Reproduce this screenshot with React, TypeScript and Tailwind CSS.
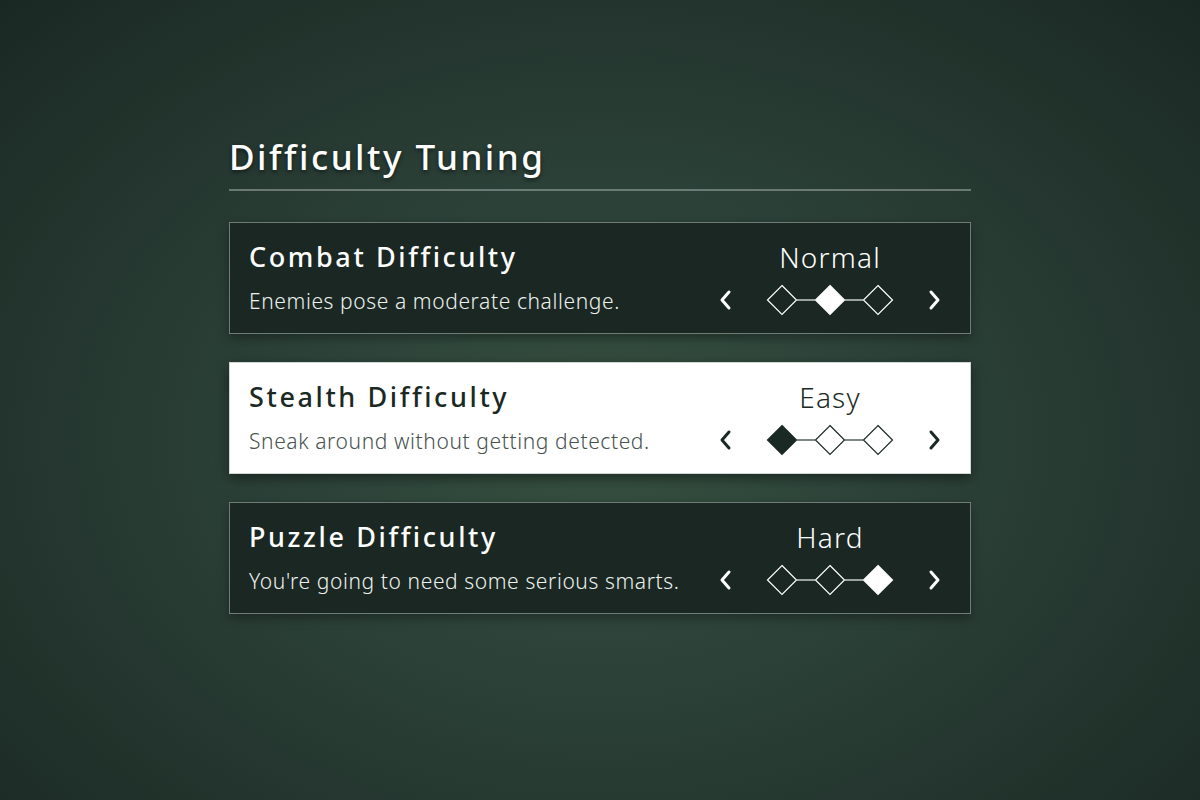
import React from 'react'

type Row = { title: string; desc: string; value: string; level: number; light?: boolean }

const ROWS: Row[] = [
  { title: 'Combat Difficulty', desc: 'Enemies pose a moderate challenge.', value: 'Normal', level: 1 },
  { title: 'Stealth Difficulty', desc: 'Sneak around without getting detected.', value: 'Easy', level: 0, light: true },
  { title: 'Puzzle Difficulty', desc: "You're going to need some serious smarts.", value: 'Hard', level: 2 },
]

function Selector({ level, light }: { level: number; light?: boolean }) {
  const fg = light ? '#1b2924' : '#ffffff'
  const xs = [72, 120, 168]
  return (
    <svg width="240" height="34" viewBox="0 0 240 34">
      <polyline points="19,9 12,17 19,25" fill="none" stroke={fg} strokeWidth="3" strokeLinecap="round" strokeLinejoin="round" />
      <polyline points="221,9 228,17 221,25" fill="none" stroke={fg} strokeWidth="3" strokeLinecap="round" strokeLinejoin="round" />
      <line x1="87" y1="17" x2="105" y2="17" stroke={light ? '#55615c' : '#c9cfcc'} strokeWidth="1.5" />
      <line x1="135" y1="17" x2="153" y2="17" stroke={light ? '#55615c' : '#c9cfcc'} strokeWidth="1.5" />
      {xs.map((x, i) => (
        <polygon
          key={i}
          points={`${x},2.5 ${x + 14.5},17 ${x},31.5 ${x - 14.5},17`}
          fill={i === level ? fg : 'none'}
          stroke={fg}
          strokeWidth="1.2"
          strokeLinejoin="miter"
        />
      ))}
    </svg>
  )
}

export default function App() {
  return (
    <div
      className="w-[1200px] h-[800px] flex justify-center bg-[radial-gradient(ellipse_at_50%_55%,#36503f_0%,#2d433a_35%,#1a2823_100%)]"
      style={{ fontFamily: '"Noto Sans", Lato, sans-serif' }}
    >
      <div className="w-[742px] pt-[134px]">
        <h1 className="text-[35px] leading-[46px] font-medium tracking-[2.5px] text-white [text-shadow:0_2px_4px_rgba(0,0,0,0.55)]">
          Difficulty Tuning
        </h1>
        <div className="mt-[9px] h-[2px] bg-[#7c8a84]/80" />
        <div className="mt-[31px] flex flex-col gap-[28px]">
          {ROWS.map(r => (
            <div
              key={r.title}
              className={`h-[112px] flex items-stretch justify-between border ${
                r.light
                  ? 'bg-white border-[#cfd6d3] shadow-[0_4px_12px_rgba(0,0,0,0.45)]'
                  : 'bg-[#1a2722] border-[#6f7c77] shadow-[0_4px_10px_rgba(0,0,0,0.35)]'
              }`}
            >
              <div className="pl-[19px] pt-[16px]">
                <div className={`text-[27px] leading-[36px] font-medium tracking-[2.6px] ${r.light ? 'text-[#1b2924]' : 'text-white'}`}>
                  {r.title}
                </div>
                <div className={`mt-[12px] text-[21px] leading-[28px] font-light tracking-[0.6px] ${r.light ? 'text-[#45524d]' : 'text-[#eef1ef]'}`}>
                  {r.desc}
                </div>
              </div>
              <div className="w-[240px] mr-[20px] flex flex-col items-center pt-[16px]">
                <div className={`text-[28px] leading-[36px] font-light tracking-[1.2px] ${r.light ? 'text-[#1b2924]' : 'text-white'}`}>
                  {r.value}
                </div>
                <div className="mt-[8px]">
                  <Selector level={r.level} light={r.light} />
                </div>
              </div>
            </div>
          ))}
        </div>
      </div>
    </div>
  )
}
